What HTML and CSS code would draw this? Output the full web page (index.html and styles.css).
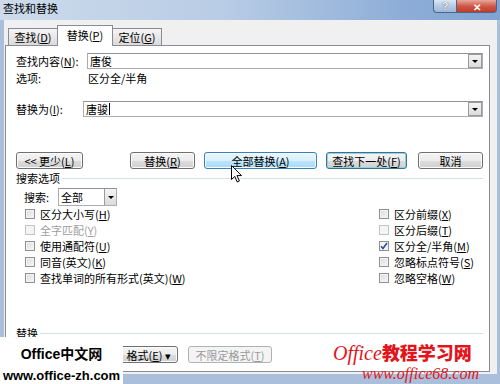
FILE: index.html
```html
<!DOCTYPE html>
<html>
<head>
    <meta charset="utf-8">
    <link rel="stylesheet" href="styles.css">
</head>
<body>
    <div class="window">
        <div class="titlebar">
            <span class="title">查找和替换</span>
            <div class="caption">
                <span class="cap-help">?</span>
                <span class="cap-close">✕</span>
            </div>
        </div>
        <div class="client">
            <div class="tabs">
                <div class="tab">查找(<u>D</u>)</div>
                <div class="tab active">替换(<u>P</u>)</div>
                <div class="tab">定位(<u>G</u>)</div>
            </div>
            <div class="panel">
                <!-- 查找 / 替换 -->
                <div class="row row-find">
                    <span class="label label-find">查找内容(<u>N</u>):</span>
                    <div class="combo">
                        <span class="combo-text">唐俊</span>
                        <span class="drop"></span>
                    </div>
                </div>
                <div class="row row-opt">
                    <span class="label label-opt">选项:</span>
                    <span>区分全/半角</span>
                </div>
                <div class="row row-repl">
                    <span class="label label-repl">替换为(<u>I</u>):</span>
                    <div class="combo">
                        <span class="combo-text">唐骏<span class="caret"></span></span>
                        <span class="drop"></span>
                    </div>
                </div>

                <div class="buttons">
                    <span class="btn btn-less"><span>&lt;&lt; 更少(<u>L</u>)</span></span>
                    <span class="btn btn-repl"><span>替换(<u>R</u>)</span></span>
                    <span class="btn btn-all default"><span>全部替换(<u>A</u>)</span></span>
                    <span class="btn btn-next focus"><span>查找下一处(<u>F</u>)</span></span>
                    <span class="btn btn-cancel"><span>取消</span></span>
                </div>

                <!-- 搜索选项 -->
                <div class="section">搜索选项</div>
                <div class="search-row">
                    <span class="search-label">搜索:</span>
                    <div class="select">
                        <span class="combo-text">全部</span>
                        <span class="drop"></span>
                    </div>
                </div>
                <div class="checks">
                    <div class="check"><span class="box"></span><span>区分大小写(<u>H</u>)</span></div>
                    <div class="check"><span class="box"></span><span>区分前缀(<u>X</u>)</span></div>
                    <div class="check disabled"><span class="box"></span><span>全字匹配(<u>Y</u>)</span></div>
                    <div class="check"><span class="box light"></span><span>区分后缀(<u>T</u>)</span></div>
                    <div class="check"><span class="box"></span><span>使用通配符(<u>U</u>)</span></div>
                    <div class="check"><span class="box checked"><svg width="8" height="8" viewBox="0 0 8 8"><path d="M1 4.2 L3 6.5 L7 1" fill="none" stroke="#2a4d9c" stroke-width="1.6"/></svg></span><span>区分全/半角(<u>M</u>)</span></div>
                    <div class="check"><span class="box"></span><span>同音(英文)(<u>K</u>)</span></div>
                    <div class="check"><span class="box"></span><span>忽略标点符号(<u>S</u>)</span></div>
                    <div class="check"><span class="box"></span><span>查找单词的所有形式(英文)(<u>W</u>)</span></div>
                    <div class="check"><span class="box"></span><span>忽略空格(<u>W</u>)</span></div>
                </div>

                <!-- 替换 (左边两个按钮大部分被水印盖住) -->
                <div class="section section-repl">替换</div>
                <div class="bottom-buttons">
                    <span class="btn btn-fmt"></span>
                    <span class="btn btn-special"><span>格式(<u>E</u>) ▾</span></span>
                    <span class="btn btn-nofmt disabled"><span>不限定格式(<u>T</u>)</span></span>
                </div>
            </div>
        </div>

        <svg class="cursor" width="12" height="19" viewBox="0 0 12 19">
            <path d="M0.5 0.5 L0.5 14.5 L3.8 11.4 L6.2 17 L8.4 16 L6 10.6 L10.5 10.6 Z" fill="#fff" stroke="#000" stroke-width="1"/>
        </svg>

        <div class="wm-left">
            <div class="wm-left-1">Office中文网</div>
            <div class="wm-left-2">www.office-zh.com</div>
        </div>
        <div class="wm-right">
            <div class="wm-right-1">Office<span class="wm-cjk">教程学习网</span></div>
            <div class="wm-right-2">www.office68.com</div>
        </div>
    </div>
</body>
</html>
```

FILE: styles.css
```css
/* Word 2007 - dialog "查找和替换" */
* {
    box-sizing: border-box;
}
body {
    margin: 0;
    font-family: "Noto Sans CJK SC", sans-serif;
    font-size: 11px;
    color: #000;
}
u {
    text-decoration: underline;
}
.window {
    position: relative;
    width: 500px;
    height: 384px;
    display: flex;
    flex-direction: column;
    background: #a9bfdb;
    overflow: hidden;
}

/* title bar */
.titlebar {
    height: 20px;
    display: flex;
    justify-content: space-between;
    align-items: flex-start;
    background: linear-gradient(to right, #cddbec, #b8cce5 45%, #8eaed8 80%, #7fa3d2);
}
.title {
    padding-left: 3px;
    line-height: 17px;
}
.caption {
    display: flex;
    margin-right: 3px;
}
.cap-help, .cap-close {
    height: 13px;
    display: flex;
    align-items: center;
    justify-content: center;
    border: 1px solid #4d6585;
    border-top: none;
    font-weight: bold;
    color: #fff;
}
.cap-help {
    width: 24px;
    border-radius: 0 0 0 4px;
    background: linear-gradient(#dbe7f4, #b6cbe5 50%, #9fb9da);
    color: #eef3fa;
    font-family: "Liberation Sans", sans-serif;
    font-size: 11px;
    text-shadow: 0 0 1px #334;
}
.cap-close {
    width: 40px;
    border-left: none;
    border-radius: 0 0 4px 0;
    background: linear-gradient(#e8a89c, #cf5a48 50%, #c13b27);
    font-size: 10px;
}

/* client area */
.client {
    flex: 1;
    margin: 0 3px 10px 4px;
    padding: 5px 7px 0 1px;
    background: #f0f0f0;
}
.tabs {
    display: flex;
    align-items: flex-end;
    height: 20px;
    padding-left: 3px;
}
.tab {
    width: 50px;
    height: 17px;
    border: 1px solid #898c95;
    border-bottom: none;
    background: linear-gradient(#f5f5f5, #e8e8e8 50%, #dbdbdb);
    text-align: center;
    line-height: 16px;
}
.tab.active {
    width: 56px;
    height: 21px;
    margin: 0 -1px -1px;
    background: #fff;
    position: relative;
    z-index: 1;
    line-height: 19px;
}
.panel {
    height: 327px;
    border: 1px solid #898c95;
    background: #fff;
    padding: 0 6px 0 10px;
}

/* rows */
.row {
    display: flex;
    align-items: center;
}
.row-find {
    margin-top: 7px;
    height: 16px;
}
.row-opt {
    margin-top: 2px;
    height: 14px;
}
.row-repl {
    margin-top: 16px;
    height: 16px;
}
.label-find {
    width: 71px;
}
.label-opt {
    width: 72px;
}
.label-repl {
    width: 67px;
}
.combo, .select {
    flex: 1;
    height: 16px;
    display: flex;
    align-items: center;
    border: 1px solid #abadb3;
    border-top-color: #8e939b;
    background: #fff;
    padding: 0 0 0 2px;
}
.combo-text {
    display: flex;
    align-items: center;
}
.caret {
    width: 1px;
    height: 12px;
    margin-left: 1px;
    background: #000;
}
.drop {
    margin-left: auto;
    width: 14px;
    height: 14px;
    border: 1px solid #9a9a9a;
    background: linear-gradient(#f4f4f4, #dcdcdc);
    display: flex;
    align-items: center;
    justify-content: center;
}
.drop::after {
    content: "";
    border-left: 3px solid transparent;
    border-right: 3px solid transparent;
    border-top: 3px solid #000;
}

/* buttons */
.buttons, .bottom-buttons {
    display: flex;
    height: 17px;
}
.buttons {
    margin-top: 35px;
}
.btn {
    height: 17px;
    display: flex;
    align-items: center;
    justify-content: center;
    border: 1px solid #707070;
    border-radius: 3px;
    background: linear-gradient(#f4f4f4, #ececec 50%, #dddddd 51%, #d0d0d0);
    box-shadow: inset 0 0 0 1px #fbfbfb;
    white-space: nowrap;
}
.btn.default {
    border-color: #3c7fb1;
    background: linear-gradient(#eaf6fd, #d9f0fc 50%, #bee6fd 51%, #a7d9f5);
    box-shadow: inset 0 0 0 1px #f4fbff;
}
.btn.focus {
    border-color: #3a7489;
    box-shadow: inset 0 0 0 1px #8fd3e6;
}
.btn.disabled {
    border-color: #adb2b5;
    background: #f4f4f4;
    color: #9a9a9a;
    box-shadow: none;
}
.btn-less {
    width: 67px;
}
.btn-repl {
    width: 65px;
    margin-left: 47px;
}
.btn-all {
    width: 113px;
    margin-left: 9px;
}
.btn-next {
    width: 81px;
    margin-left: 9px;
}
.btn-cancel {
    width: 65px;
    margin-left: 11px;
}
.btn-fmt {
    width: 72px;
}
.btn-special {
    width: 82px;
    margin-left: 8px;
    justify-content: flex-end;
    padding-right: 6px;
}
.btn-nofmt {
    width: 84px;
    margin-left: 10px;
}

/* section headers */
.section {
    margin-top: 2px;
    height: 14px;
    display: flex;
    align-items: center;
}
.section::after {
    content: "";
    flex: 1;
    height: 1px;
    margin-left: 2px;
    background: #d5dfe5;
}
.section-repl {
    margin-top: 40px;
}
.bottom-buttons {
    margin-top: 6px;
}

/* search options */
.search-row {
    margin-top: 3px;
    padding-left: 8px;
    height: 18px;
    display: flex;
    align-items: center;
}
.search-label {
    width: 34px;
}
.select {
    flex: none;
    width: 59px;
    height: 18px;
}
.select .drop {
    width: 12px;
    height: 16px;
    border-top: none;
    border-bottom: none;
    border-right: none;
}
.checks {
    display: grid;
    grid-template-columns: 354px 1fr;
    grid-auto-rows: 16px;
    padding-left: 8px;
}
.check {
    display: flex;
    align-items: center;
    gap: 5px;
    white-space: nowrap;
}
.check.disabled {
    color: #a0a0a0;
}
.box {
    width: 10px;
    height: 10px;
    margin-left: 1px;
    border: 1px solid #8e8f8f;
    background: linear-gradient(135deg, #dcdcdc, #f6f6f6);
    box-shadow: inset 0 0 0 1px #f4f4f4;
    display: flex;
    align-items: center;
    justify-content: center;
}
.check.disabled .box, .box.light {
    border-color: #c4c4c4;
    background: #f4f4f4;
}
.box.checked {
    background: #f4f4f4;
}

/* mouse pointer over the default button */
.cursor {
    position: absolute;
    left: 231px;
    top: 165px;
}

/* watermarks */
.wm-left {
    position: absolute;
    left: 0;
    top: 337px;
    width: 123px;
    height: 47px;
    padding-top: 6px;
    background: #fff;
    font-family: "Liberation Sans", "Noto Sans CJK SC", sans-serif;
    font-weight: bold;
    text-align: center;
}
.wm-left-1 {
    font-size: 14px;
    line-height: 22px;
}
.wm-left-1, .wm-left-2 {
    white-space: nowrap;
}
.wm-left-2 {
    font-size: 13px;
    line-height: 22px;
}
.wm-right {
    position: absolute;
    left: 333px;
    top: 340px;
    color: #e3141b;
    font-family: "Liberation Serif", "Noto Sans CJK SC", serif;
    font-style: italic;
    white-space: nowrap;
}
.wm-right-1 {
    font-size: 20px;
    line-height: 24px;
}
.wm-cjk {
    font-family: "Noto Sans CJK SC", sans-serif;
    font-style: normal;
    font-weight: 900;
    font-size: 18px;
}
.wm-right-2 {
    margin-left: 29px;
    font-size: 16px;
    line-height: 18px;
}
```
